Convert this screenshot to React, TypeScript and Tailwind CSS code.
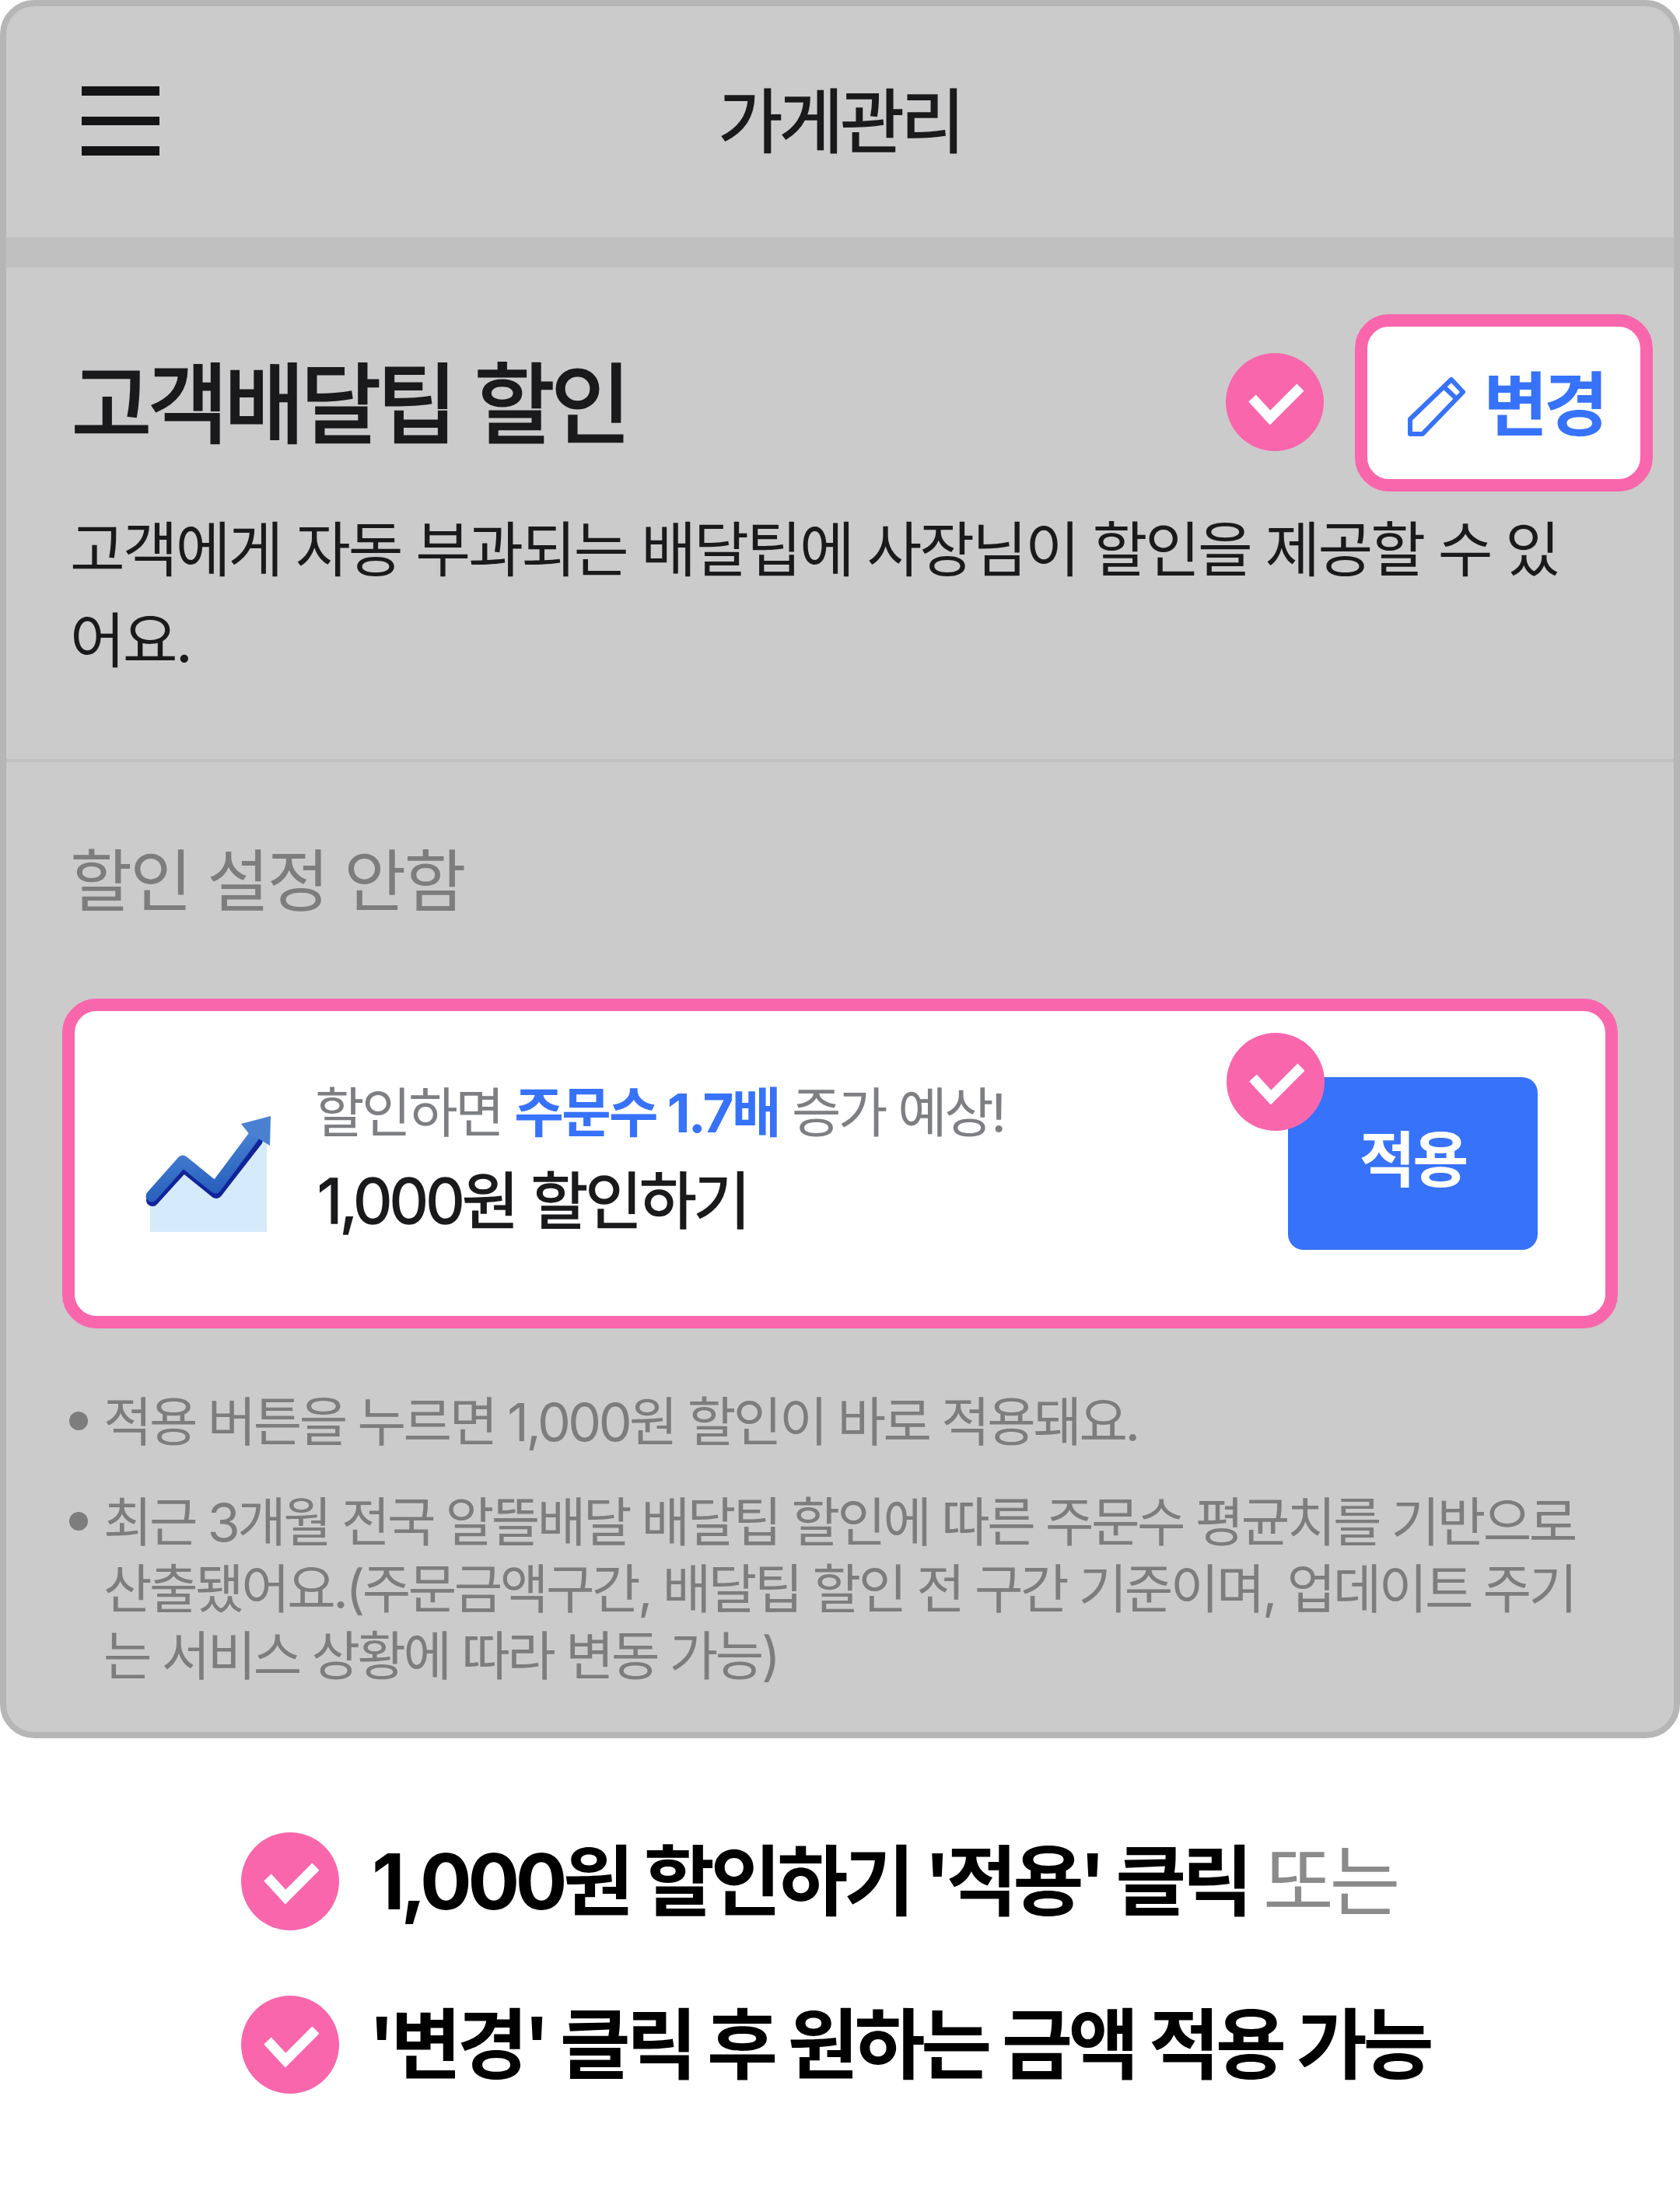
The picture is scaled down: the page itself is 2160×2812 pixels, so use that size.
const FONT = "font-['Inter','Noto_Sans_CJK_KR',sans-serif]";

function Check({ className = "" }: { className?: string }) {
  return (
    <span className={`flex h-[126px] w-[126px] shrink-0 items-center justify-center rounded-full bg-[#f966ac] ${className}`}>
      <svg width="74" height="60" viewBox="0 0 74 60" fill="none">
        <path d="M8 25 L31 50 L70 11" stroke="#fff" strokeWidth="13" />
      </svg>
    </span>
  );
}

function Chart() {
  return (
    <svg width="166" height="152" viewBox="0 0 166 152" className="mt-[26px] shrink-0">
      <defs>
        <linearGradient id="ln" x1="0" y1="0" x2="0.3" y2="1">
          <stop offset="0" stopColor="#4f8ad8" />
          <stop offset="1" stopColor="#2860bd" />
        </linearGradient>
      </defs>
      <path d="M7 112 L49 66 L91 100 L157 30 L157 151 L7 151 Z" fill="#d5ebfb" />
      <path d="M9 107 L49 63 L91 97 L143 30" stroke="#12249a" strokeWidth="16" strokeLinejoin="round" strokeLinecap="round" fill="none" transform="translate(1 3)" />
      <path d="M9 105 L49 60 L91 94 L141 27" stroke="url(#ln)" strokeWidth="15" strokeLinejoin="round" strokeLinecap="round" fill="none" />
      <path d="M124 12 L162 2 L161 40 L148 32 L136 27 Z" fill="#4a80d2" />
    </svg>
  );
}

export default function App() {
  return (
    <div className={`${FONT} h-[2812px] w-[2160px] bg-white`}>
      <div className="h-[2235px] overflow-hidden rounded-[44px] border-[8px] border-[#b6b6b6] bg-[#cbcbcb]">
        <header className="relative flex h-[297px] items-center justify-center">
          <div className="absolute left-[97px] top-[103px] flex w-[100px] flex-col gap-[27px]">
            <span className="h-[12px] bg-[#141416]" />
            <span className="h-[11px] bg-[#141416]" />
            <span className="h-[12px] bg-[#141416]" />
          </div>
          <h1 className="text-[90px] font-normal leading-none tracking-[-4.5px] text-[#1a1a1c] [-webkit-text-stroke:1.5px_#1a1a1c]">가게관리</h1>
        </header>
        <div className="h-[39px] bg-[#c0c0c0]" />

        <section className="h-[636px] border-b-[4px] border-[#c0c0c0] pl-[84px] pr-[27px]">
          <div className="flex items-start justify-between pt-[60px]">
            <h2 className="pt-[52px] text-[112px] font-normal leading-[128px] tracking-[-4.8px] text-[#1a1a1c] [-webkit-text-stroke:3px_#1a1a1c]">고객배달팁 할인</h2>
            <div className="flex items-center gap-[40px]">
              <Check className="-mt-[2px]" />
              <button className="flex h-[228px] w-[383px] items-center justify-center gap-[22px] rounded-[44px] border-[16px] border-[#f966ac] bg-white pl-[5px] pt-[6px]">
                <svg width="76" height="78" viewBox="0 0 76 78" fill="none" className="mt-[4px]">
                  <path d="M4 55 L4 74 L20 74 L72 20 L57 4 Z M47 13 L64 29" stroke="#3772fa" strokeWidth="6" strokeLinejoin="round" />
                </svg>
                <span className="text-[90px] font-bold leading-none tracking-[-5px] text-[#3772fa]">변경</span>
              </button>
            </div>
          </div>
          <p className="-ml-[2px] mt-[17px] w-[1930px] text-[77px] font-normal leading-[117px] tracking-[-3px] text-[#1a1a1c]">
            고객에게 자동 부과되는 배달팁에 사장님이 할인을 제공할 수 있어요.
          </p>
        </section>

        <div className="pl-[84px] pr-[72px]">
          <p className="-ml-[2px] pt-[104px] text-[87px] font-normal leading-[100px] tracking-[-2.8px] text-[#7d7d7d]">할인 설정 안함</p>

          <div className="relative -ml-[12px] mt-[100px] flex h-[424px] items-center rounded-[44px] border-[16px] border-[#f966ac] bg-white pl-[90px]">
            <Chart />
            <div className="mb-[12px] ml-[56px] flex flex-col">
              <p className="-ml-[3px] text-[69px] leading-[82px] tracking-[-3.4px] text-[#7d7f83]">
                할인하면 <b className="font-bold tracking-[-2.6px] text-[#3772fa]">주문수 1.7배</b> 증가 예상!
              </p>
              <p className="mt-[26px] text-[80px] font-normal leading-[92px] tracking-[-3.8px] text-[#1a1a1c] [-webkit-text-stroke:1.5px_#1a1a1c]">1,000원 할인하기</p>
            </div>
            <button className="absolute left-[1560px] top-[85px] flex h-[222px] w-[321px] items-center justify-center rounded-[20px] bg-[#3772fa] pb-[8px] text-[78px] font-bold leading-none tracking-[-3px] text-white">
              적용
            </button>
            <Check className="absolute left-[1481px] top-[28px]" />
          </div>

          <ul className="mt-[77px] flex flex-col gap-[43px] text-[68px] leading-[86px] tracking-[-3.5px] text-[#7d7d7d]">
            <li className="-ml-[3px] flex gap-[20px]">
              <span className="mt-[30px] h-[24px] w-[24px] shrink-0 rounded-full bg-[#7d7d7d]" />
              <span>적용 버튼을 누르면 1,000원 할인이 바로 적용돼요.</span>
            </li>
            <li className="-ml-[3px] flex gap-[20px]">
              <span className="mt-[30px] h-[24px] w-[24px] shrink-0 rounded-full bg-[#7d7d7d]" />
              <span className="w-[1905px]">최근 3개월 전국 알뜰배달 배달팁 할인에 따른 주문수 평균치를 기반으로 산출됐어요.(주문금액구간, 배달팁 할인 전 구간 기준이며, 업데이트 주기는 서비스 상황에 따라 변동 가능)</span>
            </li>
          </ul>
        </div>
      </div>

      <div className="flex flex-col gap-[84px] pl-[310px] pt-[121px] text-[99px] font-bold leading-[126px] tracking-[-5.4px] text-black">
        <div className="flex items-center gap-[42px]">
          <Check />
          <p>1,000원 할인하기 '적용' 클릭 <span className="font-normal text-[#8b8b8b]">또는</span></p>
        </div>
        <div className="flex items-center gap-[38px]">
          <Check />
          <p>'변경' 클릭 후 원하는 금액 적용 가능</p>
        </div>
      </div>
    </div>
  );
}
